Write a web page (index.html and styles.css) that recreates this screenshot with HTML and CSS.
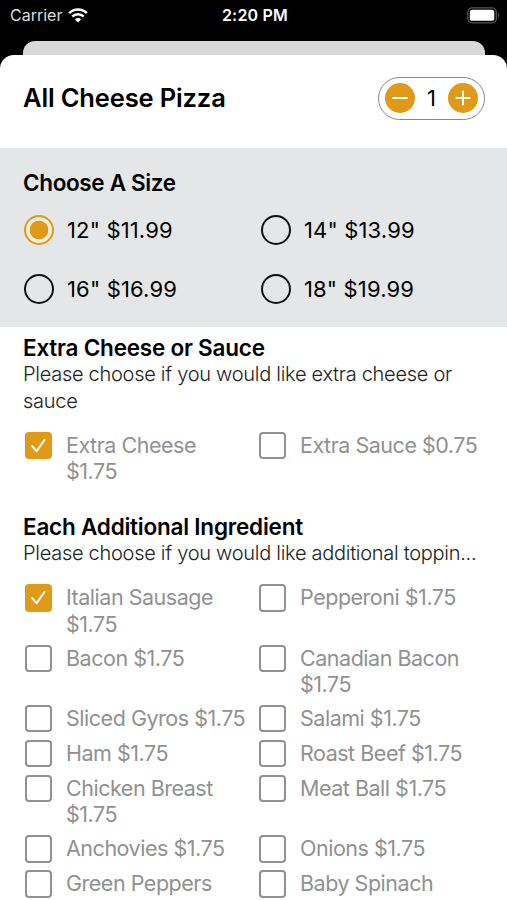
FILE: index.html
```
<!DOCTYPE html>
<html lang="en">
<head>
<meta charset="UTF-8" />
<meta name="viewport" content="width=device-width, initial-scale=1" />
<title>All Cheese Pizza</title>
<link rel="stylesheet" href="styles.css">
</head>
<body>
  <header class="status-bar">
    <div class="carrier">
      <span>Carrier</span>
      <svg class="wifi" viewBox="0 0 20 15" aria-hidden="true">
        <path d="M1.2 5.2a12.6 12.6 0 0 1 17.6 0M4.3 8.5a8.1 8.1 0 0 1 11.4 0" fill="none" stroke="#fff" stroke-width="2.5" />
        <path d="M10 14.6 6.9 11.5a4.5 4.5 0 0 1 6.2 0z" fill="#fff" />
      </svg>
    </div>
    <span class="time">2:20 PM</span>
    <svg class="battery" viewBox="0 0 33 17" aria-hidden="true">
      <rect x="0.8" y="0.8" width="28.5" height="15" rx="4.4" fill="none" stroke="#555" stroke-width="1.3" />
      <rect x="2.8" y="2.8" width="24.5" height="11" rx="2.6" fill="#fff" />
      <path d="M31 5.8c1.6.7 1.6 4.3 0 5z" fill="#555" />
    </svg>
  </header>

  <div class="back-card"></div>
  <main class="sheet">
    <div class="title-row">
      <h1>All Cheese Pizza</h1>
      <div class="stepper">
        <button type="button" aria-label="Remove one">
          <svg viewBox="0 0 30 30"><path d="M8 15h14" /></svg>
        </button>
        <span class="count">1</span>
        <button type="button" aria-label="Add one">
          <svg viewBox="0 0 30 30"><path d="M8.5 15h13M15 8.5v13" /></svg>
        </button>
      </div>
    </div>

    <section class="sizes">
      <h2>Choose A Size</h2>
      <div class="size-grid">
        <label class="size"><input type="radio" name="size" checked /><span>12" $11.99</span></label>
        <label class="size"><input type="radio" name="size" /><span>14" $13.99</span></label>
        <label class="size"><input type="radio" name="size" /><span>16" $16.99</span></label>
        <label class="size"><input type="radio" name="size" /><span>18" $19.99</span></label>
      </div>
    </section>

    <section class="extras">
      <h2>Extra Cheese or Sauce</h2>
      <p>Please choose if you would like extra cheese or sauce</p>
      <div class="options">
        <label class="option"><span class="box checked"><svg viewBox="0 0 27 27"><path d="M7 14l4.6 5.3L19.4 8" /></svg></span><span>Extra Cheese $1.75</span></label>
        <label class="option"><span class="box"></span><span>Extra Sauce $0.75</span></label>
      </div>
    </section>

    <section class="extras toppings">
      <h2>Each Additional Ingredient</h2>
      <p class="one-line">Please choose if you would like additional toppin...</p>
      <div class="options">
        <label class="option"><span class="box checked"><svg viewBox="0 0 27 27"><path d="M7 14l4.6 5.3L19.4 8" /></svg></span><span>Italian Sausage $1.75</span></label>
        <label class="option"><span class="box"></span><span>Pepperoni $1.75</span></label>
        <label class="option"><span class="box"></span><span>Bacon $1.75</span></label>
        <label class="option"><span class="box"></span><span>Canadian Bacon $1.75</span></label>
        <label class="option"><span class="box"></span><span>Sliced Gyros $1.75</span></label>
        <label class="option"><span class="box"></span><span>Salami $1.75</span></label>
        <label class="option"><span class="box"></span><span>Ham $1.75</span></label>
        <label class="option"><span class="box"></span><span>Roast Beef $1.75</span></label>
        <label class="option"><span class="box"></span><span>Chicken Breast $1.75</span></label>
        <label class="option"><span class="box"></span><span>Meat Ball $1.75</span></label>
        <label class="option"><span class="box"></span><span>Anchovies $1.75</span></label>
        <label class="option"><span class="box"></span><span>Onions $1.75</span></label>
        <label class="option"><span class="box"></span><span>Green Peppers</span></label>
        <label class="option"><span class="box"></span><span>Baby Spinach</span></label>
      </div>
    </section>
  </main>
</body>
</html>
```
FILE: styles.css
```
* {
  box-sizing: border-box;
}
body {
  margin: 0;
  height: 900px;
  overflow: hidden;
  background: #000;
  color: #000;
  font-family: Inter, "Liberation Sans", sans-serif;
}
h1,
h2,
p {
  margin: 0;
}
/* Status bar */
.status-bar {
  display: grid;
  grid-template-columns: 1fr auto 1fr;
  align-items: center;
  height: 41px;
  padding: 0 7px 11px 10px;
  color: #fff;
  font-size: 16px;
}
.carrier {
  display: flex;
  align-items: center;
  gap: 6px;
  color: #ddd;
}
.wifi {
  width: 20px;
  height: 15px;
}
.time {
  font-weight: 600;
  letter-spacing: 0.2px;
}
.battery {
  justify-self: end;
  width: 33px;
  height: 17px;
}
/* Sheet */
.back-card {
  height: 14px;
  margin: 0 22px 0 23px;
  border-radius: 12px 12px 0 0;
  background: #d9d9d9;
}
.sheet {
  height: 845px;
  overflow: hidden;
  border-radius: 14px 14px 0 0;
  background: #fff;
}
.title-row {
  display: flex;
  align-items: center;
  justify-content: space-between;
  height: 93px;
  padding: 0 22px 7px 23px;
}
h1 {
  padding-bottom: 2px;
  font-size: 25.5px;
  font-weight: 600;
  letter-spacing: -0.15px;
}
.stepper {
  display: flex;
  align-items: center;
  justify-content: space-between;
  width: 107px;
  height: 43px;
  padding: 0 6px;
  border: 1px solid #888;
  border-radius: 22px;
}
.stepper button {
  width: 30px;
  height: 30px;
  padding: 0;
  border: none;
  border-radius: 50%;
  background: #df9a17;
}
.stepper svg,
.box svg {
  display: block;
  fill: none;
  stroke: #fff;
  stroke-width: 2;
  stroke-linecap: round;
  stroke-linejoin: round;
}
.count {
  font-size: 22px;
}
h2 {
  font-size: 22.5px;
  font-weight: 600;
  line-height: 27px;
  letter-spacing: -0.22px;
}
/* Sizes */
.sizes {
  height: 179px;
  padding: 21px 23px 0 24px;
  background: #e4e6e7;
}
.sizes h2 {
  margin-left: -1px;
  letter-spacing: -0.35px;
}
.size-grid {
  display: grid;
  grid-template-columns: 237px 1fr;
  grid-auto-rows: 30px;
  row-gap: 29px;
  margin-top: 19px;
}
.size {
  display: flex;
  align-items: center;
  gap: 13px;
  font-size: 22px;
  letter-spacing: 0.15px;
}
.size input {
  appearance: none;
  width: 30px;
  height: 30px;
  margin: 0;
  border: 2px solid #111;
  border-radius: 50%;
}
.size input:checked {
  border-color: #df9a17;
  background: radial-gradient(circle, #df9a17 9px, #f8edda 9.6px);
}
/* Extras */
.extras {
  padding: 7px 25px 0 23px;
}
.extras p {
  color: #222;
  font-size: 20px;
  font-weight: 300;
  line-height: 27px;
  letter-spacing: -0.28px;
}
.extras .one-line {
  margin-right: -20px;
  white-space: nowrap;
}
.options {
  display: grid;
  grid-template-columns: 234px 1fr;
  row-gap: 7.8px;
  margin: 17px 0 0 2px;
}
.option {
  display: flex;
  gap: 14px;
  color: #919191;
  font-size: 21.5px;
  line-height: 26.2px;
  letter-spacing: -0.48px;
}
.option > span:last-child {
  max-width: 182px;
}
.box {
  flex: none;
  width: 27px;
  height: 27.3px;
  border: 2px solid #919191;
  border-radius: 4px;
}
.box.checked {
  border: none;
  background: #df9a17;
}
.toppings {
  padding-top: 29px;
}
```
